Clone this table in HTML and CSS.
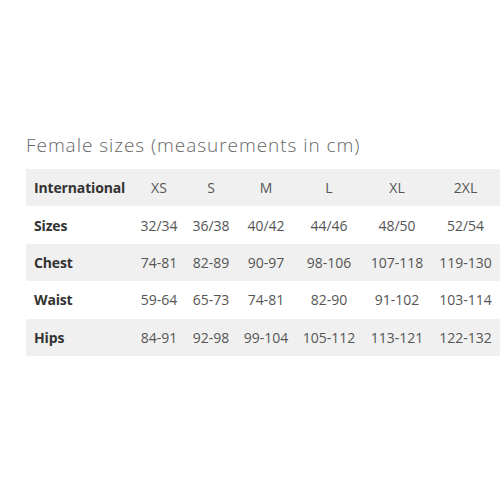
FILE: index.html
```html
<!DOCTYPE html>
<html>
<head>
<meta charset="utf-8">
<link rel="stylesheet" href="styles.css">
</head>
<body>
<div class="page">
  <h2 class="title">Female sizes (measurements in cm)</h2>
  <table class="sizes">
    <colgroup>
      <col class="c-label"><col class="c-xs"><col class="c-s"><col class="c-m"><col class="c-l"><col class="c-xl"><col class="c-2xl">
    </colgroup>
    <tr class="alt"><th>International</th><td>XS</td><td>S</td><td>M</td><td>L</td><td>XL</td><td>2XL</td></tr>
    <tr><th>Sizes</th><td>32/34</td><td>36/38</td><td>40/42</td><td>44/46</td><td>48/50</td><td>52/54</td></tr>
    <tr class="alt"><th>Chest</th><td>74-81</td><td>82-89</td><td>90-97</td><td>98-106</td><td>107-118</td><td>119-130</td></tr>
    <tr><th>Waist</th><td>59-64</td><td>65-73</td><td>74-81</td><td>82-90</td><td>91-102</td><td>103-114</td></tr>
    <tr class="alt"><th>Hips</th><td>84-91</td><td>92-98</td><td>99-104</td><td>105-112</td><td>113-121</td><td>122-132</td></tr>
  </table>
</div>
</body>
</html>
```
FILE: styles.css
```css
html, body { margin: 0; padding: 0; background: #fff; }
.page { padding: 134px 0 0 26px; width: 474px; }
.title {
  margin: 0 0 13px 0;
  font-family: "Open Sans", sans-serif;
  font-weight: 300;
  font-size: 19px;
  line-height: 22px;
  color: #666;
  letter-spacing: 0.95px;
}
.sizes {
  border-collapse: collapse;
  table-layout: fixed;
  width: 474px;
  font-family: "Open Sans", sans-serif;
  font-size: 14px;
}
.c-label { width: 107px; }
.c-xs { width: 52px; }
.c-s { width: 52px; }
.c-m { width: 58px; }
.c-l { width: 68px; }
.c-xl { width: 68px; }
.c-2xl { width: 69px; }
.sizes tr { height: 37.4px; }
.sizes tr.alt { background: #f0f0f0; }
.sizes th {
  text-align: left;
  padding: 0 0 0 8px;
  font-weight: 700;
  color: #333;
  white-space: nowrap;
  letter-spacing: -0.15px;
}
.sizes td {
  text-align: center;
  padding: 0;
  color: #555;
  white-space: nowrap;
}
```
